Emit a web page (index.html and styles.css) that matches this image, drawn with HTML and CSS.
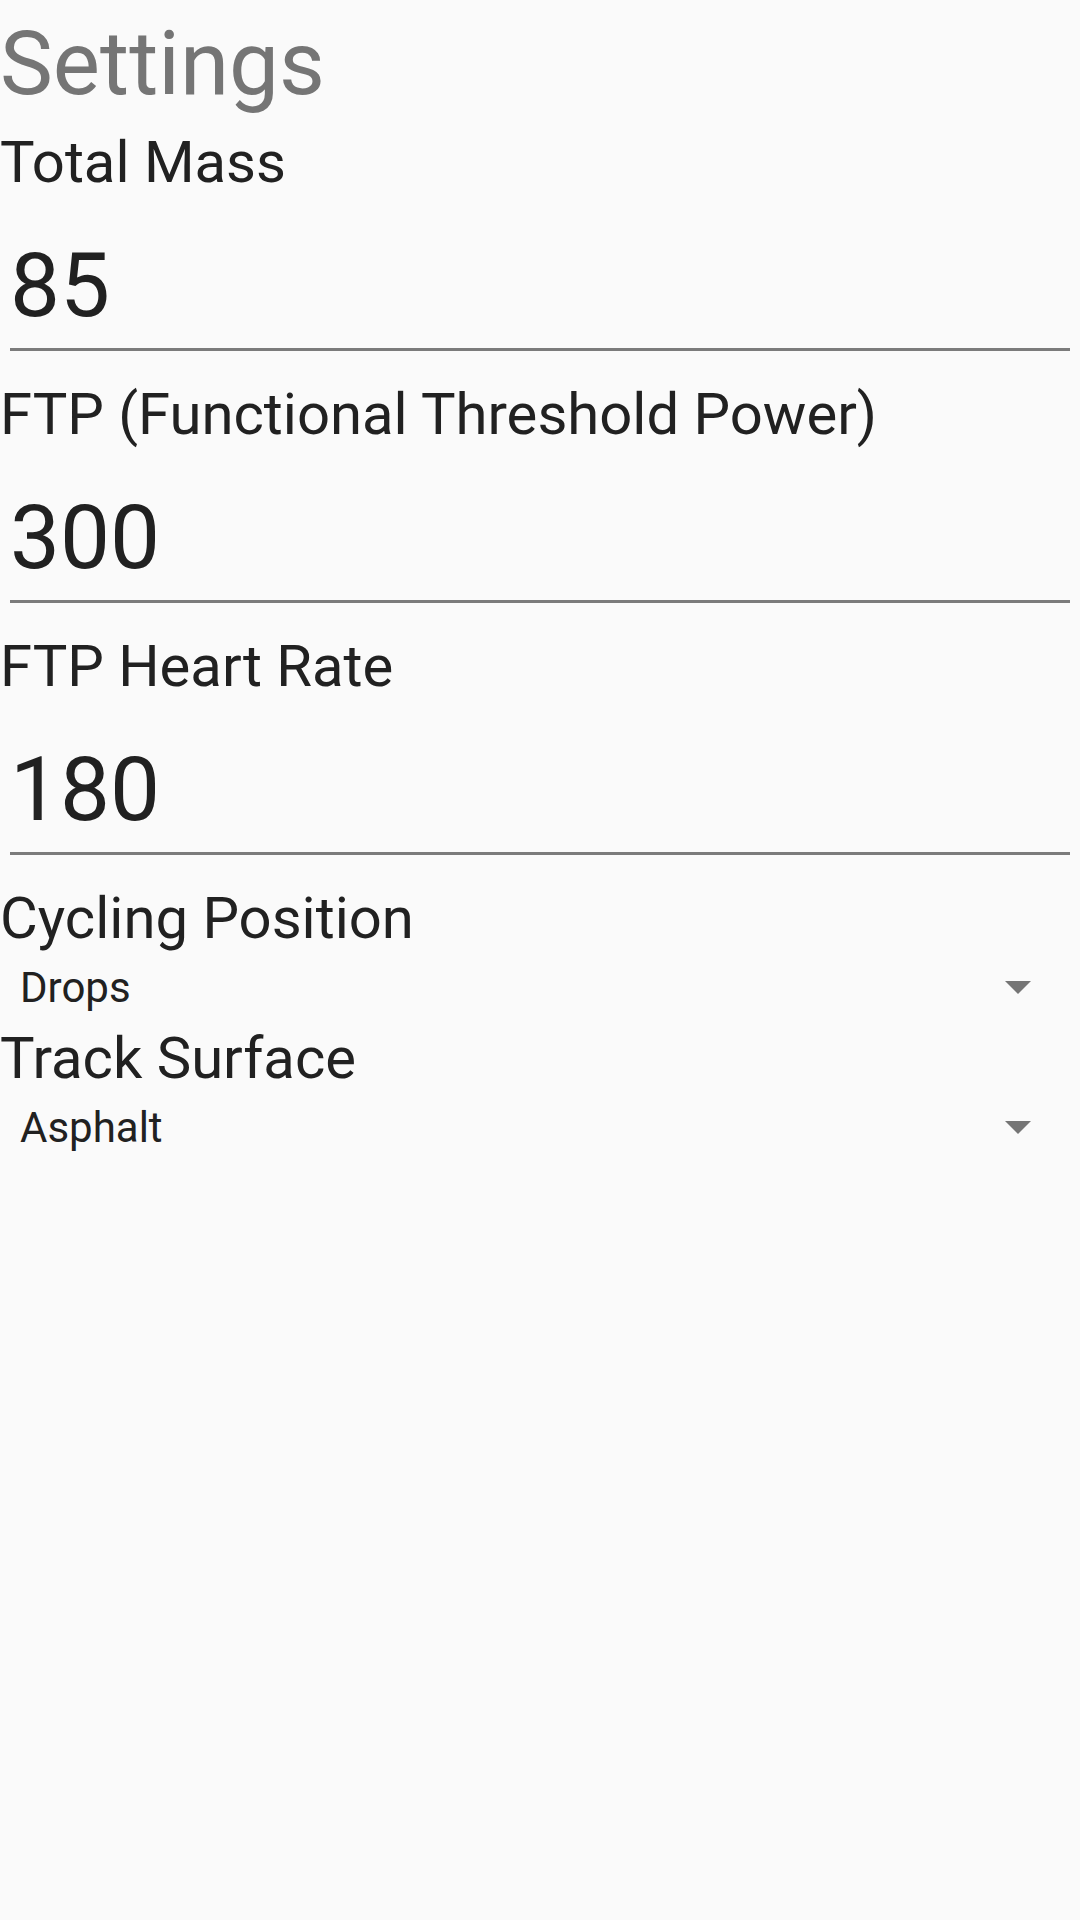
FILE: index.html
```html
<!DOCTYPE html>
<html>
<head>
<meta charset="utf-8">
<link rel="stylesheet" href="styles.css">
</head>
<body>
<div class="screen">
  <h1 class="title">Settings</h1>

  <div class="field">
    <div class="label">Total Mass</div>
    <div class="input">85</div>
  </div>

  <div class="field">
    <div class="label">FTP (Functional Threshold Power)</div>
    <div class="input">300</div>
  </div>

  <div class="field">
    <div class="label">FTP Heart Rate</div>
    <div class="input">180</div>
  </div>

  <div class="select-field">
    <div class="label">Cycling Position</div>
    <div class="spinner">
      <span class="spinner-text">Drops</span>
      <svg class="arrow" width="26" height="13" viewBox="0 0 26 13"><polygon points="0,0 26,0 13,13" fill="#757575"/></svg>
    </div>
  </div>

  <div class="select-field">
    <div class="label">Track Surface</div>
    <div class="spinner">
      <span class="spinner-text">Asphalt</span>
      <svg class="arrow" width="26" height="13" viewBox="0 0 26 13"><polygon points="0,0 26,0 13,13" fill="#757575"/></svg>
    </div>
  </div>
</div>
</body>
</html>
```

FILE: styles.css
```css
html, body {
  margin: 0;
  padding: 0;
  background: #fafafa;
}

body {
  width: 1080px;
  height: 1920px;
  font-family: Roboto, "Noto Sans", "Liberation Sans", sans-serif;
  color: #212121;
}

.screen {
  display: flex;
  flex-direction: column;
}

.title {
  margin: 0;
  padding: 12px 0 12px 0;
  font-size: 89px;
  line-height: 104px;
  font-weight: 400;
  color: #757575;
}

.field {
  display: flex;
  flex-direction: column;
  margin-bottom: 29px;
}

.label {
  font-size: 58px;
  line-height: 68px;
  font-weight: 400;
  color: #212121;
}

.input {
  margin: 0 10px 0 10px;
  padding: 38px 0 10px 0;
  font-size: 89px;
  line-height: 104px;
  color: #212121;
  border-bottom: 3px solid #7b7b7b;
}

.select-field {
  display: flex;
  flex-direction: column;
}

.spinner {
  display: flex;
  align-items: center;
  justify-content: space-between;
  height: 72px;
  padding: 0 49px 0 20px;
}

.spinner-text {
  font-size: 42px;
  line-height: 72px;
  color: #212121;
}

.arrow {
  display: block;
  margin-bottom: 2px;
}
```
